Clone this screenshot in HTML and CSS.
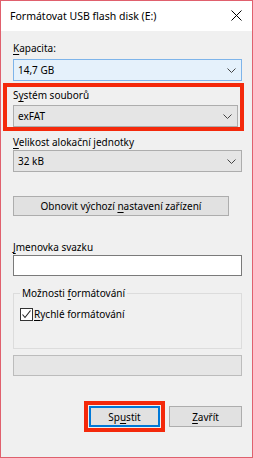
FILE: index.html
```html
<!DOCTYPE html>
<html lang="cs">
<head>
    <meta charset="UTF-8">
    <title>Formátovat USB flash disk (E:)</title>
    <link rel="stylesheet" href="styles.css">
</head>
<body>
    <div class="window">
        <div class="titlebar">
            <span class="title">Formátovat USB flash disk (E:)</span>
            <svg class="close" width="11" height="11" viewBox="0 0 11 11">
                <path d="M0.5 0.5 L10.5 10.5 M10.5 0.5 L0.5 10.5" stroke="#000" stroke-width="1" fill="none"/>
            </svg>
        </div>
        <div class="content">
            <div class="label"><u>K</u>apacita:</div>
            <div class="combo focused">
                <span>14,7 GB</span>
                <svg class="chevron" width="9" height="5" viewBox="0 0 9 5"><path d="M0.5 0.5 L4.5 4.5 L8.5 0.5" stroke="#444" fill="none"/></svg>
            </div>

            <div class="mark mark-field">
                <div class="label">S<u>y</u>stém souborů</div>
                <div class="combo">
                    <span>exFAT</span>
                    <svg class="chevron" width="9" height="5" viewBox="0 0 9 5"><path d="M0.5 0.5 L4.5 4.5 L8.5 0.5" stroke="#444" fill="none"/></svg>
                </div>
            </div>

            <div class="label label-tight"><u>V</u>elikost alokační jednotky</div>
            <div class="combo combo-tight">
                <span>32 kB</span>
                <svg class="chevron" width="9" height="5" viewBox="0 0 9 5"><path d="M0.5 0.5 L4.5 4.5 L8.5 0.5" stroke="#444" fill="none"/></svg>
            </div>

            <div class="btn btn-reset"><span>Obnovit výchozí <u>n</u>astavení zařízení</span></div>

            <div class="label label-name"><u>J</u>menovka svazku</div>
            <div class="textbox"></div>

            <fieldset class="group">
                <legend>Možnosti <u>f</u>ormátování</legend>
                <div class="check-row">
                    <span class="checkbox">
                        <svg width="11" height="11" viewBox="0 0 11 11"><path d="M1.5 5.5 L4 8.5 L9.5 1.5" stroke="#222" stroke-width="1.1" fill="none"/></svg>
                    </span>
                    <span><u>R</u>ychlé formátování</span>
                </div>
            </fieldset>

            <div class="progress"></div>

            <div class="actions">
                <div class="mark mark-btn">
                    <div class="btn btn-default"><span>Sp<u>u</u>stit</span></div>
                </div>
                <div class="btn btn-close"><span><u>Z</u>avřít</span></div>
            </div>
        </div>
    </div>
</body>
</html>
```

FILE: styles.css
```css
body {
    margin: 0;
    background: #f0f0f0;
    font-family: "Noto Sans", "DejaVu Sans", sans-serif;
    font-size: 10px;
    color: #000;
}
u {
    text-decoration-thickness: 1px;
    text-underline-offset: 2px;
}
.window {
    width: 253px;
    height: 458px;
    box-sizing: border-box;
    border: 1px solid #e0606d;
    background: #f0f0f0;
}
.titlebar {
    height: 30px;
    background: #fff;
    display: flex;
    align-items: center;
    justify-content: space-between;
    padding: 0 10px 0 9px;
}
.title {
    font-size: 10.5px;
    padding-bottom: 1px;
}
.close {
    display: block;
    margin-top: -1px;
}
.content {
    padding: 0 10px 0 12px;
}
.label {
    height: 14px;
    line-height: 14px;
    margin-top: 10px;
}
.combo {
    height: 22px;
    box-sizing: border-box;
    margin-top: 4px;
    border: 1px solid #adadad;
    background: #e5e5e5;
    display: flex;
    align-items: center;
    justify-content: space-between;
    padding: 0 5px 0 4px;
}
.combo.focused {
    border-color: #7eb4ea;
    background: #e5f1fb;
}
.chevron {
    display: block;
}
.mark {
    border: 4px solid #f4290b;
}
.mark-field {
    margin: 2px -2px 0 -10px;
    padding: 1px 2px 0 6px;
}
.mark-field .label {
    margin-top: 0;
}
.mark-field .combo {
    margin-top: 3px;
}
.label-tight {
    margin-top: 4px;
}
.combo-tight {
    margin-top: 1px;
}
.btn {
    box-sizing: border-box;
    border: 1px solid #adadad;
    background: #e1e1e1;
    display: flex;
    align-items: center;
    justify-content: center;
}
.btn-reset {
    width: 216px;
    height: 20px;
    margin-top: 24px;
}
.label-name {
    margin-top: 24px;
}
.textbox {
    height: 21px;
    box-sizing: border-box;
    margin-top: 1px;
    border: 1px solid #7a7a7a;
    background: #fff;
}
.group {
    margin: 10px 0 0 0;
    padding: 0 6px;
    height: 63px;
    box-sizing: border-box;
    border: 1px solid #dcdcdc;
}
.group legend {
    padding: 0 2px;
    line-height: 14px;
}
.check-row {
    display: flex;
    align-items: center;
    gap: 1px;
    margin-top: 7px;
}
.checkbox {
    width: 13px;
    height: 13px;
    box-sizing: border-box;
    border: 1px solid #333;
    background: #fff;
    display: flex;
    align-items: center;
    justify-content: center;
}
.checkbox svg {
    display: block;
}
.progress {
    height: 21px;
    box-sizing: border-box;
    margin-top: 6px;
    border: 1px solid #bcbcbc;
    background: #e6e6e6;
}
.actions {
    display: flex;
    justify-content: flex-end;
    align-items: center;
    gap: 4px;
    margin-top: 25px;
}
.mark-btn {
    padding: 1px;
}
.btn-default {
    width: 71px;
    height: 21px;
    border: 2px solid #0078d7;
}
.btn-close {
    width: 73px;
    height: 21px;
}
```
